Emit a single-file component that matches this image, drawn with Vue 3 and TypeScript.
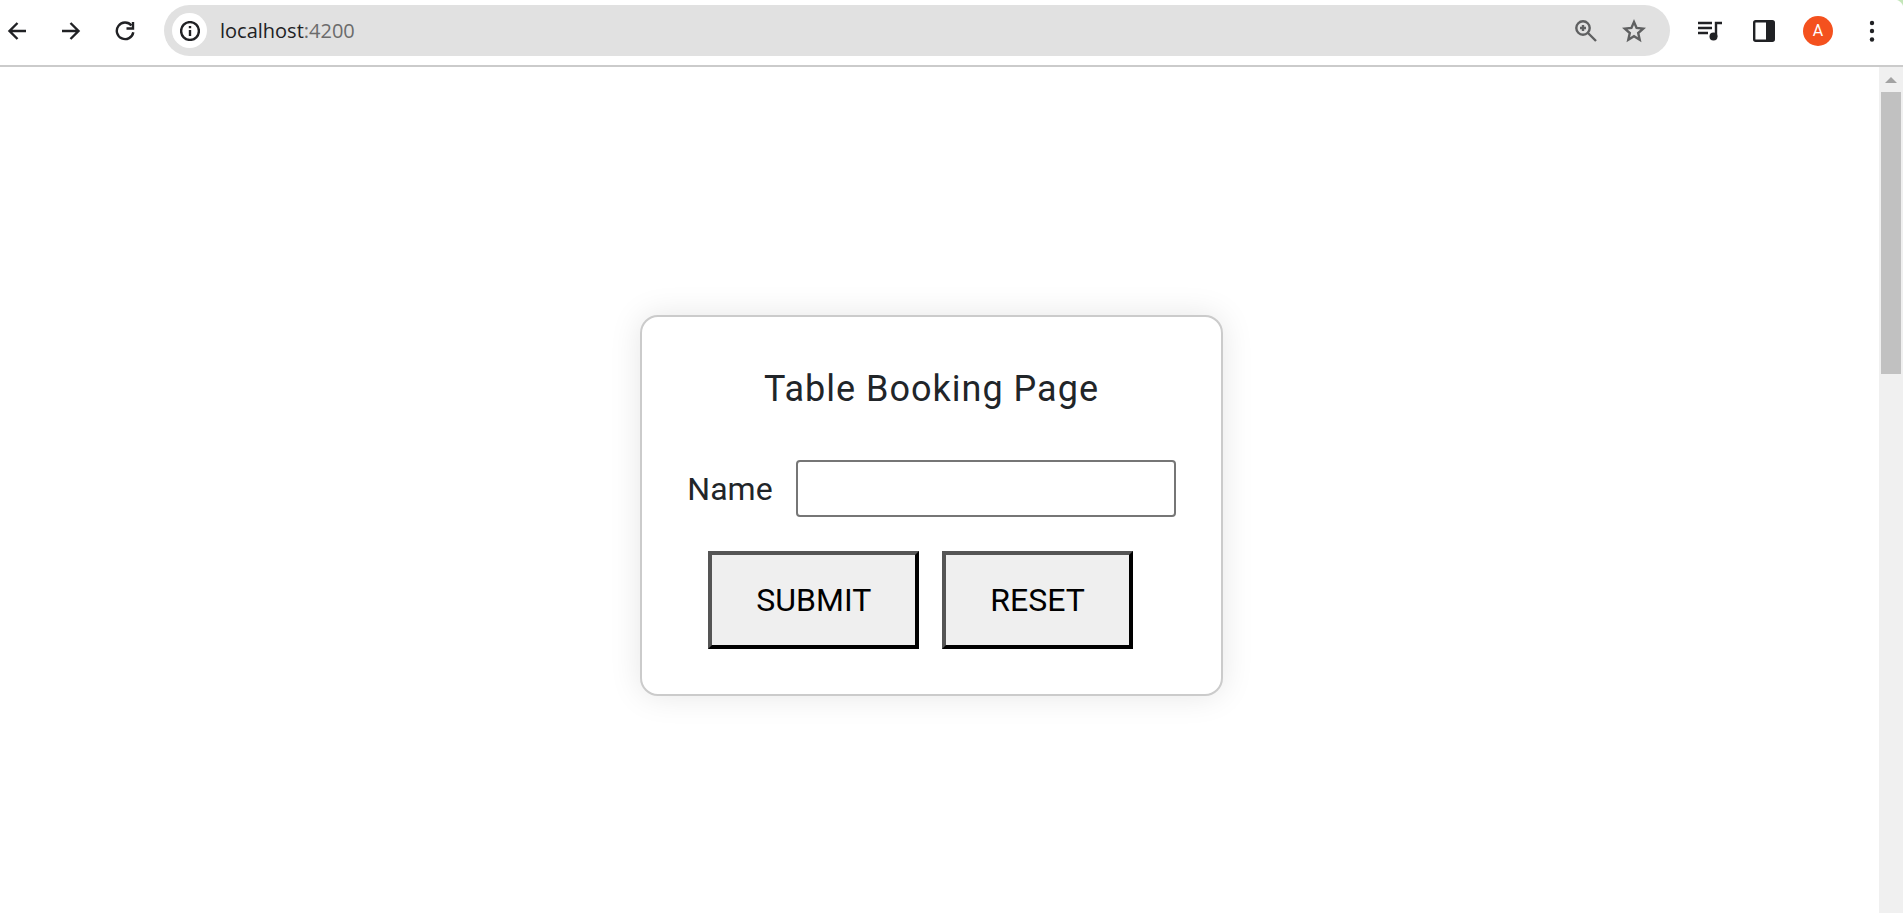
<script setup lang="ts">
import { ref } from 'vue'

const name = ref('')

function reset(): void {
  name.value = ''
}
</script>

<template>
  <div class="window">
    <header class="toolbar">
      <nav class="nav">
        <button type="button" class="icon" aria-label="Back">
          <svg width="20" height="20" viewBox="0 0 20 20"><path d="M19 10H3M10.500 2L2.500 10L10.500 18" /></svg>
        </button>
        <button type="button" class="icon" aria-label="Forward">
          <svg width="20" height="20" viewBox="0 0 20 20"><path d="M1 10H17M9.500 2L17.500 10L9.500 18" /></svg>
        </button>
        <button type="button" class="icon" aria-label="Reload">
          <svg width="20" height="20" viewBox="0 0 20 20">
            <path d="M16.500 4.500A8.300 8.300 0 1 0 18.300 11.200" />
            <path d="M18 1V7.500H11.500" />
          </svg>
        </button>
      </nav>

      <div class="address">
        <button type="button" class="icon info" aria-label="View site information">
          <svg width="20" height="20" viewBox="0 0 20 20">
            <circle cx="10" cy="10" r="8.900" />
            <path d="M10 9V15M10 5V7.300" />
          </svg>
        </button>
        <div class="url" role="textbox" aria-label="Address" tabindex="0">localhost<span class="port">:4200</span></div>
        <button type="button" class="icon muted" aria-label="Zoom">
          <svg width="22" height="22" viewBox="0 0 22 22">
            <circle cx="8" cy="8" r="6.700" />
            <path d="M13 13L21 21M8 5V11M5 8H11" />
          </svg>
        </button>
        <button type="button" class="icon muted" aria-label="Bookmark this tab">
          <svg width="24" height="24" viewBox="0 0 24 24">
            <path d="M12 3L14.600 8.900L21.300 9.600L16.200 14L17.700 20.700L12 17.200L6.300 20.700L7.800 14L2.700 9.600L9.400 8.900Z" />
          </svg>
        </button>
      </div>

      <div class="actions">
        <button type="button" class="icon" aria-label="Media controls">
          <svg width="24" height="24" viewBox="0 0 24 24">
            <path d="M0 4H14M0 9H14M0 14H10M18 18V4H24" />
            <circle class="solid" cx="15.500" cy="17.500" r="4" />
          </svg>
        </button>
        <button type="button" class="icon" aria-label="Side panel">
          <svg width="22" height="22" viewBox="0 0 22 22">
            <rect x="1.200" y="1.200" width="19.600" height="19.600" rx="1.500" />
            <path class="solid" d="M13 1H20.500V21H13Z" />
          </svg>
        </button>
        <button type="button" class="avatar" aria-label="Profile">A</button>
        <button type="button" class="icon" aria-label="Menu">
          <svg width="20" height="24" viewBox="0 0 20 24">
            <g class="solid"><circle cx="10" cy="4" r="2.200" /><circle cx="10" cy="12" r="2.200" /><circle cx="10" cy="20.500" r="2.200" /></g>
          </svg>
        </button>
      </div>
      <span class="corner"></span>
    </header>

    <div class="viewport">
      <main class="page">
        <form class="card" @submit.prevent @reset.prevent="reset">
          <h1>Table Booking Page</h1>
          <div class="field">
            <label for="name">Name</label>
            <input id="name" v-model="name" type="text" autocomplete="off" />
          </div>
          <div class="buttons">
            <button type="submit">SUBMIT</button>
            <button type="reset">RESET</button>
          </div>
        </form>
      </main>
      <div class="scrollbar" aria-hidden="true">
        <svg class="up" width="12" height="6" viewBox="0 0 12 6"><path d="M0 6L6 0L12 6Z" /></svg>
        <div class="thumb"></div>
      </div>
    </div>
  </div>
</template>

<style>
body {
  margin: 0;
}
</style>

<style scoped>
.window {
  box-sizing: border-box;
  display: flex;
  flex-direction: column;
  min-height: 100vh;
  background: #fff;
  color: #212529;
  font-family: Roboto, "Liberation Sans", sans-serif;
}

.toolbar {
  position: relative;
  display: flex;
  align-items: center;
  box-sizing: border-box;
  height: 67px;
  padding: 0 15px 4px 1px;
  border-bottom: 2px solid #cbcbcb;
}

.nav {
  display: flex;
  gap: 22px;
}

.icon {
  display: flex;
  align-items: center;
  justify-content: center;
  flex: none;
  width: 32px;
  height: 36px;
  padding: 0;
  border: 0;
  border-radius: 50%;
  background: none;
  color: #202124;
}

.icon svg {
  fill: none;
  stroke: currentColor;
  stroke-width: 2.4;
}

.icon .solid {
  fill: currentColor;
  stroke: none;
}

.icon.muted {
  color: #5f6061;
}

.address {
  display: flex;
  align-items: center;
  flex: 1;
  box-sizing: border-box;
  height: 51px;
  margin-left: 23px;
  padding: 0 20px 0 8px;
  border-radius: 26px;
  background: #e1e1e1;
  gap: 16px;
}

.icon.info {
  width: 35px;
  height: 35px;
  margin-right: -3px;
  background: #fff;
}

.url {
  flex: 1;
  color: #202124;
  font: 20px/28px "Open Sans", "Noto Sans", sans-serif;
}

.port {
  color: #6b6b6b;
}

.actions {
  display: flex;
  align-items: center;
  gap: 22px;
  margin-left: 24px;
}

.avatar {
  width: 30px;
  height: 30px;
  margin: 0 1px;
  padding: 0;
  border: 0;
  border-radius: 50%;
  background: #f4511e;
  color: #fff;
  font: 16px/30px Roboto, sans-serif;
}

.corner {
  position: absolute;
  top: 0;
  right: 0;
  width: 9px;
  height: 9px;
  background: radial-gradient(circle at 0 100%, transparent 9px, #c3e6b8 10px);
}

.viewport {
  display: flex;
  flex: 1;
}

.page {
  display: flex;
  flex: 1;
  align-items: flex-start;
  justify-content: center;
  padding: 248px 16px 48px 0;
}

.card {
  padding: 45px;
  border: 2px solid #cbcbcb;
  border-radius: 18px;
  background: #fff;
  box-shadow: 0 0 32px rgba(0, 0, 0, 0.1);
}

h1 {
  margin: 0 0 44px;
  font-size: 36px;
  font-weight: 400;
  line-height: 54px;
  letter-spacing: 1px;
  text-align: center;
}

.field {
  display: flex;
  align-items: center;
  gap: 23px;
}

label {
  font-size: 32px;
  line-height: 44px;
}

input {
  box-sizing: border-box;
  width: 380px;
  height: 57px;
  padding: 4px 8px;
  border: 2px solid #767676;
  border-radius: 4px;
  background: #fff;
  font: 32px Roboto, sans-serif;
}

.buttons {
  display: flex;
  justify-content: center;
  gap: 23px;
  margin-top: 34px;
  padding-right: 22px;
}

.buttons button {
  padding: 22px 44px;
  border: 4px solid;
  border-color: #555 #000 #000 #555;
  background: #efefef;
  color: #000;
  font: 32px/46px Roboto, sans-serif;
}

.scrollbar {
  display: flex;
  flex-direction: column;
  align-items: center;
  width: 24px;
  background: #f0f0f0;
}

.up {
  margin: 10px 0 9px;
  fill: #a3a3a3;
}

.thumb {
  width: 20px;
  height: 282px;
  background: #c1c1c1;
}
</style>
